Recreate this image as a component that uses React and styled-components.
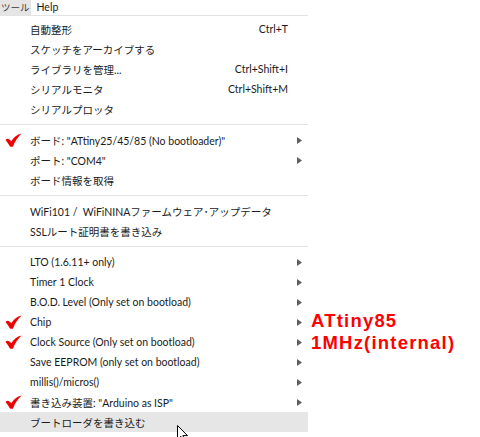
import React from "react";
import styled, { createGlobalStyle } from "styled-components";

const GlobalStyle = createGlobalStyle`
  html, body {
    margin: 0;
    padding: 0;
    background: #ffffff;
  }
  body {
    font-family: Lato, "Noto Sans CJK JP", sans-serif;
    color: #1b1b1b;
  }
`;

const items = [
  { label: "自動整形", shortcut: "Ctrl+T" },
  { label: "スケッチをアーカイブする" },
  { label: "ライブラリを管理...", shortcut: "Ctrl+Shift+I" },
  { label: "シリアルモニタ", shortcut: "Ctrl+Shift+M" },
  { label: "シリアルプロッタ" },
  { sep: true },
  { label: "ボード: \"ATtiny25/45/85 (No bootloader)\"", sub: true, checked: true },
  { label: "ポート: \"COM4\"", sub: true },
  { label: "ボード情報を取得" },
  { sep: true },
  { label: "WiFi101 /  WiFiNINAファームウェア･アップデータ" },
  { label: "SSLルート証明書を書き込み" },
  { sep: true },
  { label: "LTO (1.6.11+ only)", sub: true },
  { label: "Timer 1 Clock", sub: true },
  { label: "B.O.D. Level (Only set on bootload)", sub: true },
  { label: "Chip", sub: true, checked: true },
  { label: "Clock Source (Only set on bootload)", sub: true, checked: true },
  { label: "Save EEPROM (only set on bootload)", sub: true },
  { label: "millis()/micros()", sub: true },
  { label: "書き込み装置: \"Arduino as ISP\"", sub: true, checked: true },
  { label: "ブートローダを書き込む", hover: true },
];

const Check = () => (
  <svg width="17" height="14" viewBox="0 0 17 14">
    <path
      d="M0.5 7 C2.5 5 4.2 5.8 6.3 8.3 C8.8 4.2 12 1.5 16.5 0.5 C13 3.8 10 8 8 13.5 C7 13.9 5.6 13.9 4.8 13.2 C3.6 11 2.2 8.8 0.5 7 Z"
      fill="#f00000"
    />
  </svg>
);

const Arrow = () => (
  <svg width="5" height="7" viewBox="0 0 5 7">
    <path d="M0 0 L5 3.5 L0 7 Z" fill="#5f5f5f" />
  </svg>
);

export default function App() {
  return (
    <>
      <GlobalStyle />
      <Page>
        <MenuBar>
          <BarItem active>ツール</BarItem>
          <BarItem>Help</BarItem>
        </MenuBar>
        <Body>
          <Menu>
            {items.map((it, i) =>
              it.sep ? (
                <Separator key={i} />
              ) : (
                <Row key={i} hover={it.hover}>
                  <CheckCell>{it.checked && <Check />}</CheckCell>
                  <Label>{it.label}</Label>
                  <Shortcut>{it.shortcut}</Shortcut>
                  <ArrowCell>{it.sub && <Arrow />}</ArrowCell>
                </Row>
              )
            )}
            <Cursor>
              <svg width="12" height="18" viewBox="0 0 12 18">
                <path
                  d="M0.5 0.5 L0.5 14.5 L3.8 11.3 L6.3 17 L8.3 16.1 L5.9 10.6 L10.5 10.6 Z"
                  fill="#ffffff"
                  stroke="#000000"
                  strokeWidth="1"
                  strokeLinejoin="miter"
                />
              </svg>
            </Cursor>
          </Menu>
          <Notes>
            <Note>ATtiny85</Note>
            <Note>1MHz(internal)</Note>
          </Notes>
        </Body>
      </Page>
    </>
  );
}

const Page = styled.div`
  width: 480px;
  height: 437px;
  overflow: hidden;
  background: #ffffff;
`;

const MenuBar = styled.div`
  display: flex;
  width: 308px;
  height: 15px;
  border-bottom: 1px solid #e3e3e3;
  font-size: 10px;
  line-height: 15px;
`;

const BarItem = styled.div`
  white-space: nowrap;
  padding: ${(p) => (p.active ? "0 1px 0 1px" : "0 0 0 6px")};
  background: ${(p) => (p.active ? "#e5e5e5" : "transparent")};
  color: ${(p) => (p.active ? "#3a3a3a" : "#1b1b1b")};
  font-size: ${(p) => (p.active ? "9.5px" : "10.5px")};
`;

const Body = styled.div`
  display: flex;
  align-items: flex-start;
`;

const Menu = styled.div`
  position: relative;
  width: 308px;
  padding-top: 3px;
  font-size: 10.5px;
`;

const Row = styled.div`
  display: flex;
  align-items: center;
  height: 20px;
  background: ${(p) => (p.hover ? "#e6e6e6" : "transparent")};
`;

const CheckCell = styled.div`
  width: 30px;
  padding-left: 5px;
  box-sizing: border-box;
  display: flex;
  align-items: center;
`;

const Label = styled.div`
  flex: 1;
  white-space: pre;
`;

const Shortcut = styled.div`
  white-space: nowrap;
  color: #1b1b1b;
`;

const ArrowCell = styled.div`
  width: 20px;
  display: flex;
  justify-content: flex-end;
  padding-right: 6px;
  box-sizing: border-box;
`;

const Separator = styled.div`
  height: 11px;
  display: flex;
  align-items: center;
  &::after {
    content: "";
    flex: 1;
    height: 1px;
    background: #e3e3e3;
  }
`;

const Cursor = styled.div`
  position: absolute;
  left: 177px;
  top: 409px;
  line-height: 0;
`;

const Notes = styled.div`
  display: flex;
  flex-direction: column;
  gap: 1px;
  padding: 294px 0 0 3px;
`;

const Note = styled.div`
  color: #ff0000;
  font-family: "Liberation Sans", Arial, sans-serif;
  font-weight: 700;
  font-size: 18.5px;
  line-height: 21px;
  letter-spacing: 1.2px;
  white-space: nowrap;
`;
